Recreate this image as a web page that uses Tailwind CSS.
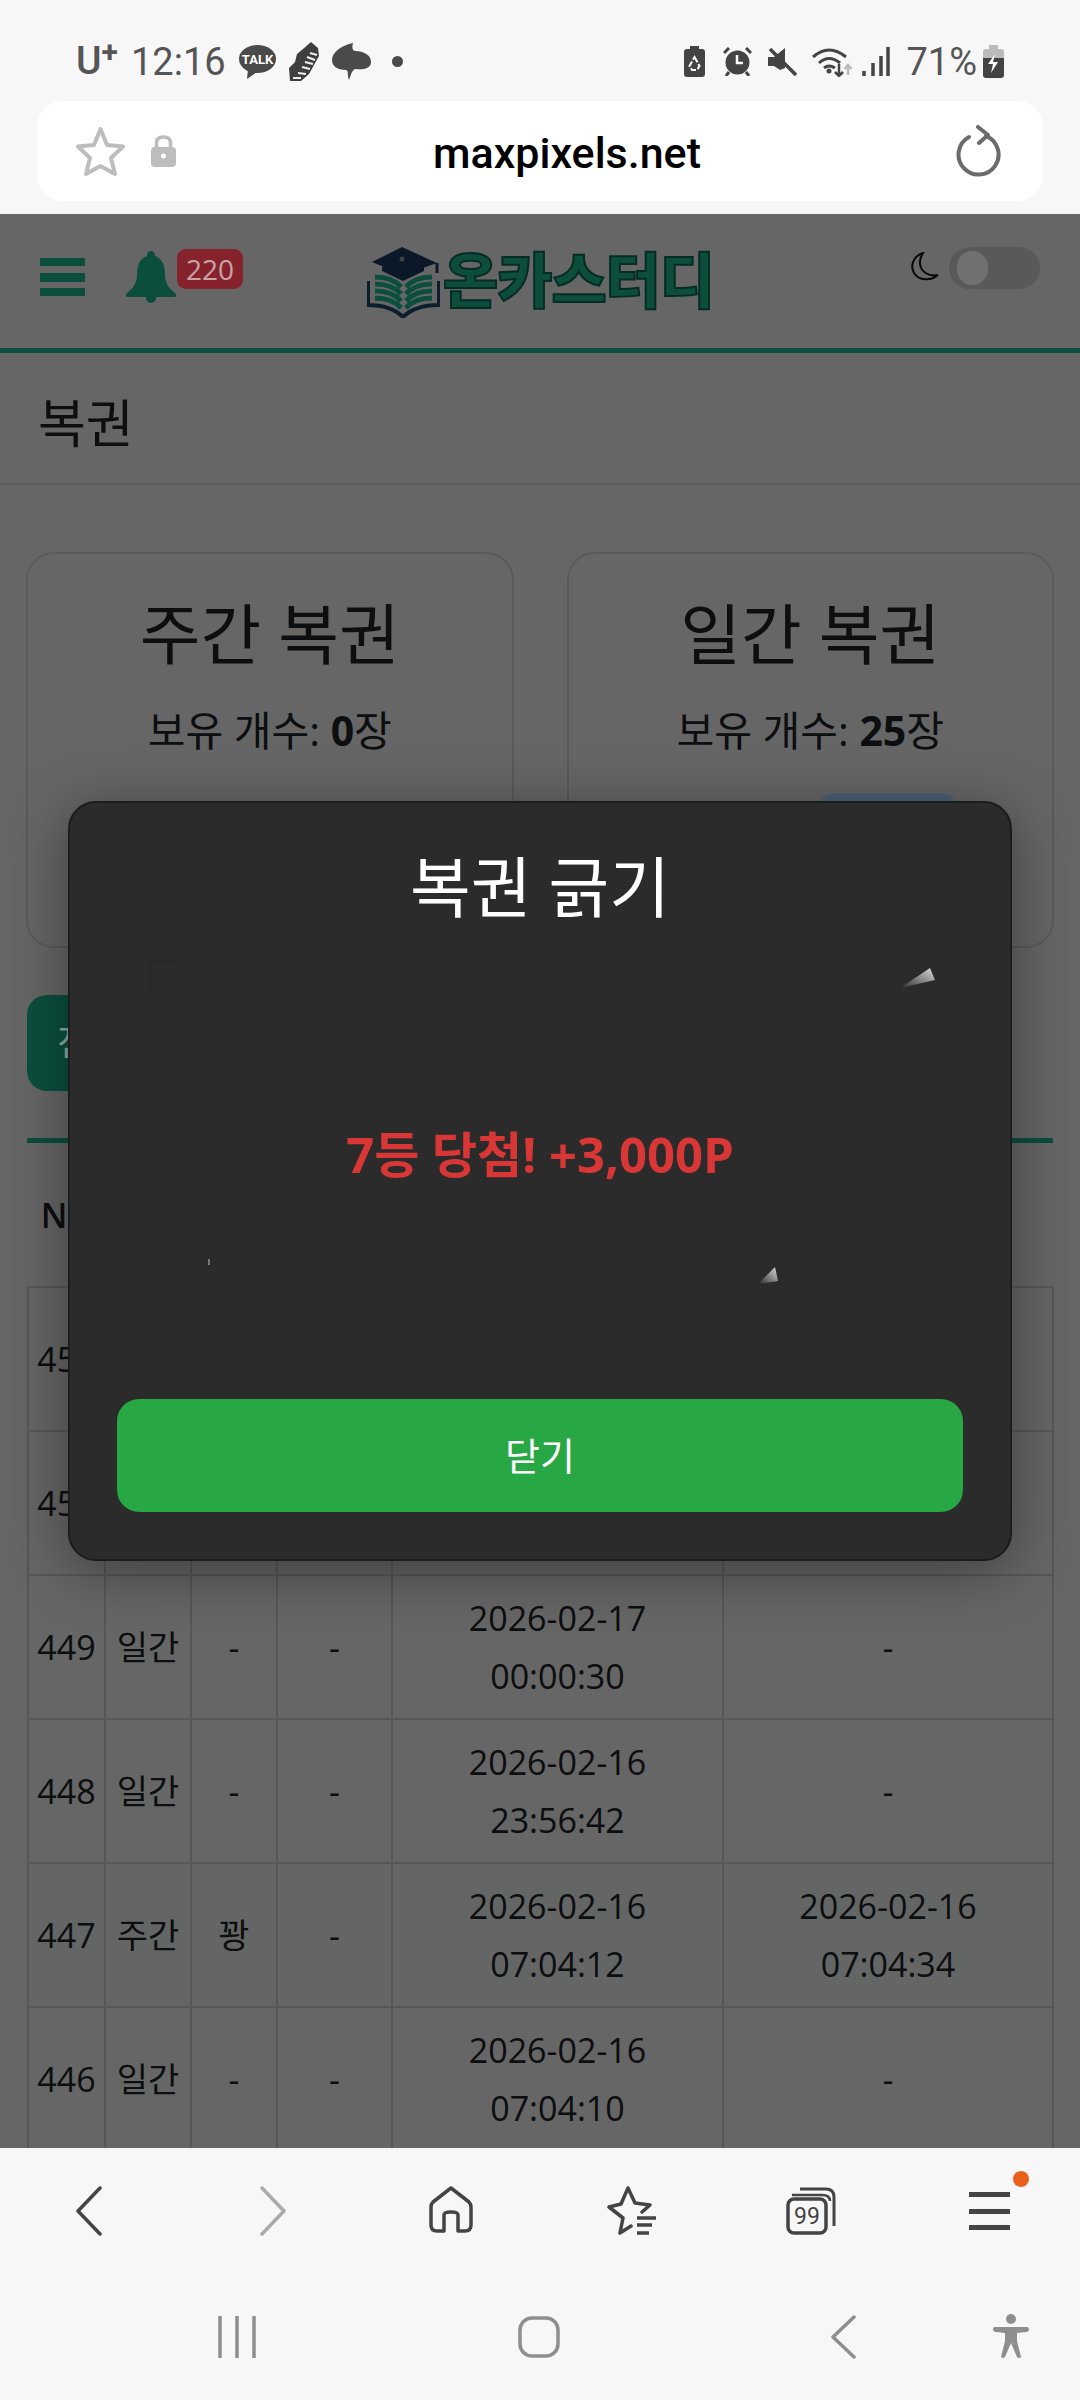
<!DOCTYPE html>
<html lang="ko">

<head>
	<meta charset="UTF-8">
	<meta name="viewport" content="width=device-width, initial-scale=1.0">
	<script src="https://cdn.jsdelivr.net/npm/@tailwindcss/browser@4"></script>
	<title>복권</title>
</head>

<body class="font-['Open_Sans','Noto_Sans_CJK_KR',sans-serif] text-[#212529]">
	<div class="flex flex-col w-[1080px] h-[2400px] overflow-hidden bg-[#f7f7f7]">

		<!-- browser chrome, top -->
		<div class="h-[214px] shrink-0 font-['Roboto','Noto_Sans_CJK_KR',sans-serif]">
			<div class="flex items-center justify-between h-[101px] pl-[76px] pr-[76px] pt-[22px] text-[#555]">
				<div class="flex items-center">
					<span class="text-[39px] leading-none font-medium w-[55px]">U<span class="relative top-[-12px] text-[30px] font-bold">+</span></span>
					<span class="text-[38px] leading-none w-[108px]">12:16</span>
					<svg class="w-[37px] h-[34px]" viewBox="0 0 37 34">
						<ellipse cx="18.5" cy="14" rx="18.5" ry="14" fill="#4a4a4a" />
						<path d="M9 24 L8 34 L18 27 Z" fill="#4a4a4a" />
						<text x="18.5" y="19" text-anchor="middle" font-size="13" font-weight="700" fill="#fff" font-family="Roboto">TALK</text>
					</svg>
					<svg class="w-[30px] h-[39px] ml-[13px]" viewBox="0 0 30 39">
						<path d="M22 0 L29 6 L30 14 L20 32 L12 39 L1 39 L0 26 L6 20 L8 12 L14 7 Z" fill="#3f3f3f" />
						<path d="M28 13 L21 11 M26 18 L18 15 M24 22 L16 20 M21 27 L13 25 M17 32 L9 31 M12 36 L4 36" stroke="#eee" stroke-width="2" />
					</svg>
					<svg class="w-[39px] h-[37px] ml-[13px]" viewBox="0 0 39 37">
						<path d="M21 0 C20 4 20 7 23 8 C32 8 39 12 39 19 C39 26 30 27 24 26 C20 26 19 32 17 37 C15 32 17 28 14 27 C5 27 0 23 0 17 C0 9 10 2 21 0 Z" fill="#4a4a4a" />
					</svg>
					<span class="w-[11px] h-[11px] rounded-full bg-[#4a4a4a] ml-[21px]"></span>
				</div>
				<div class="flex items-center">
					<svg class="w-[21px] h-[31px]" viewBox="0 0 21 31">
						<path d="M6 0 H15 V3 H18 Q21 3 21 6 V28 Q21 31 18 31 H3 Q0 31 0 28 V6 Q0 3 3 3 H6 Z" fill="#444" />
						<path d="M10.5 11 L15.5 20 L13 24 H8 L5.5 20 Z" fill="none" stroke="#fff" stroke-width="2" stroke-dasharray="6 2" />
					</svg>
					<svg class="w-[29px] h-[29px] ml-[18px]" viewBox="0 0 29 29">
						<circle cx="14.5" cy="15.5" r="12" fill="#444" />
						<path d="M1 6 L6 1 M28 6 L23 1 M6 25 L3 29 M23 25 L26 29" stroke="#444" stroke-width="3" />
						<path d="M14 8 V16 H20" stroke="#fff" stroke-width="2.5" fill="none" />
					</svg>
					<svg class="w-[29px] h-[28px] ml-[16px]" viewBox="0 0 29 28">
						<path d="M0 9 H6 L17 0 V20 L12 22 L6 18 H0 Z" fill="#444" />
						<path d="M2 1 L28 27" stroke="#444" stroke-width="3.5" />
					</svg>
					<svg class="w-[41px] h-[31px] ml-[15px]" viewBox="0 0 41 31">
						<path d="M1 11 Q17 -3 34 11 M7 17 Q17 8 28 17 M12 22 Q17 18 23 22" stroke="#444" stroke-width="3" fill="none" />
						<circle cx="17" cy="25" r="2.5" fill="#444" />
						<path d="M27 18 V30 M23 26 L27 30 L31 26" stroke="#444" stroke-width="2.5" fill="none" />
						<path d="M36 29 V19 M32.500 23 L36 19 L39.500 23" stroke="#bbb" stroke-width="2.5" fill="none" />
					</svg>
					<svg class="w-[28px] h-[29px] ml-[9px]" viewBox="0 0 28 29">
						<path d="M2 29 V24 M11 29 V16 M19 29 V9 M26 29 V0" stroke="#444" stroke-width="3.500" />
					</svg>
					<span class="text-[38px] leading-none ml-[16px]">71%</span>
					<svg class="w-[21px] h-[33px] ml-[6px]" viewBox="0 0 21 33">
						<path d="M6 0 H15 V4 H18 Q21 4 21 7 V13 H0 V7 Q0 4 3 4 H6 Z" fill="#bbb" />
						<path d="M0 13 H21 V30 Q21 33 18 33 H3 Q0 33 0 30 Z" fill="#444" />
						<path d="M12 9 L5 19 H10 L8 28 L15 17 H10 Z" fill="#fff" />
					</svg>
				</div>
			</div>
			<div class="flex items-center h-[100px] mx-[37px] rounded-[26px] bg-white">
				<svg class="w-[51px] h-[51px] ml-[38px]" viewBox="0 0 51 51">
					<path d="M25.500 3 L32 19 L48 20.500 L36 32 L40 48 L25.500 40 L11 48 L15 32 L3 20.500 L19 19 Z" fill="none" stroke="#bdbdbd" stroke-width="4" stroke-linejoin="round" />
				</svg>
				<svg class="w-[25px] h-[32px] ml-[25px]" viewBox="0 0 25 32">
					<path d="M5.500 14 V8 Q5.500 2 12.500 2 Q19.500 2 19.500 8 V14" fill="none" stroke="#bdbdbd" stroke-width="3.500" />
					<rect y="12" width="25" height="20" rx="4" fill="#bdbdbd" />
					<circle cx="12.500" cy="21" r="2.500" fill="#fff" />
				</svg>
				<span class="text-[43px] leading-none font-medium text-black w-[273px] ml-[257px] pt-[4px] whitespace-nowrap">maxpixels.net</span>
				<svg class="w-[46px] h-[52px] ml-[250px]" viewBox="0 0 46 52">
					<path d="M13 12 A20 20 0 1 0 30 11" fill="none" stroke="#6b6b6b" stroke-width="4" stroke-linecap="round" />
					<path d="M22 2 L32 10 L23 18" fill="none" stroke="#6b6b6b" stroke-width="4" stroke-linecap="round" stroke-linejoin="round" />
				</svg>
			</div>
		</div>

		<!-- page under the modal -->
		<div class="relative flex-1 overflow-hidden bg-white">
			<div class="flex items-start h-[139px] pl-[40px] pr-[40px] border-b-[5px] border-[#1cc49a]">
				<svg class="w-[45px] h-[38px] mt-[44px]" viewBox="0 0 45 38">
					<path d="M0 0 H45 V8 H0 Z M0 15 H45 V24 H0 Z M0 30 H45 V38 H0 Z" fill="#1cc49a" />
				</svg>
				<svg class="w-[50px] h-[52px] ml-[41px] mt-[37px]" viewBox="0 0 50 52">
					<path d="M25 0 C22 0 21 3 21 5 C13 8 11 15 11 24 C11 33 6 38 1 42 C-1 44 0 46 2 46 H48 C50 46 51 44 49 42 C44 38 39 33 39 24 C39 15 37 8 29 5 C29 3 28 0 25 0 Z" fill="#1cc49a" />
					<circle cx="25" cy="47" r="5" fill="#1cc49a" />
				</svg>
				<span class="relative z-20 flex items-center justify-center w-[66px] h-[40px] ml-[1px] mt-[35px] rounded-[9px] bg-[#85222c] text-[#c9a3a8] text-[28px] leading-none">220</span>
				<svg class="w-[73px] h-[71px] ml-[124px] mt-[33px]" viewBox="0 0 73 71">
					<path d="M1 34 V58 C15 58 28 62 36 70 C44 62 58 58 72 58 V34" fill="none" stroke="#1f4a70" stroke-width="4" />
					<path d="M8 30 C18 30 28 33 34 40 M8 37 C18 37 28 40 34 47 M8 44 C18 44 28 47 34 54 M8 51 C18 51 28 54 34 61 M65 30 C55 30 45 33 39 40 M65 37 C55 37 45 40 39 47 M65 44 C55 44 45 47 39 54 M65 51 C55 51 45 54 39 61" fill="none" stroke="#1cc49a" stroke-width="5" />
					<path d="M15 20 H57 V24 L36 34 L15 24 Z" fill="#193e64" />
					<path d="M35 0 L70 16 L36 28 L5 15 Z" fill="#193e64" />
					<circle cx="35" cy="12" r="2.500" fill="#9aa" />
					<path d="M70 16 V26" stroke="#193e64" stroke-width="3" />
				</svg>
				<span class="ml-[3px] mt-[30px] text-[60px] leading-[72px] font-black tracking-[-1px] whitespace-nowrap text-[#1fc494] [-webkit-text-stroke:2px_#0e6f5a]">온카스터디</span>
				<svg class="w-[29px] h-[29px] ml-auto mt-[38px]" viewBox="0 0 29 29">
					<path d="M13 1 C3 4 0 14 4 21 C9 29 21 29 28 23 C19 25 11 20 10 12 C9.500 8 11 4 13 1 Z" fill="none" stroke="#111" stroke-width="2" />
				</svg>
				<span class="relative z-20 flex items-center w-[91px] h-[42px] ml-[10px] mt-[33px] pl-[8px] rounded-full bg-[#595959]">
					<span class="w-[31px] h-[34px] rounded-full bg-[#707070]"></span>
				</span>
			</div>

			<div class="h-[132px] border-b-2 border-[#dee2e6] pl-[38px] pt-[35px] text-[52px] leading-[70px]">복권</div>

			<div class="px-[27px]">
				<div class="grid grid-cols-2 gap-[53px] mx-[-1px] mt-[67px]">
					<div class="h-[396px] rounded-[28px] border-2 border-[#dee2e6] pt-[34px] text-center">
						<h2 class="text-[66px] leading-[90px]">주간 복권</h2>
						<p class="mt-[24px] text-[41px] leading-[56px]">보유 개수: <b>0</b>장</p>
					</div>
					<div class="relative h-[396px] rounded-[28px] border-2 border-[#dee2e6] pt-[34px] text-center">
						<h2 class="text-[66px] leading-[90px]">일간 복권</h2>
						<p class="mt-[24px] text-[41px] leading-[56px]">보유 개수: <b>25</b>장</p>
						<span class="absolute z-20 left-[251px] top-[239px] w-[136px] h-[70px] rounded-[14px] bg-[#4c6074]"></span>
					</div>
				</div>

				<div class="relative z-20 flex items-center w-[200px] h-[96px] mt-[47px] pl-[30px] rounded-[20px] bg-[#0b4f3e] text-[#8fb0a2] text-[36px]">전체</div>
				<div class="mt-[47px] border-t-[5px] border-[#1cc49a]"></div>

				<table class="table-fixed w-[1025px] border-collapse text-center text-[34px] leading-[58px]">
					<colgroup>
						<col class="w-[77px]">
						<col class="w-[86px]">
						<col class="w-[86px]">
						<col class="w-[115px]">
						<col class="w-[331px]">
						<col class="w-[330px]">
					</colgroup>
					<tr class="h-[144px] font-semibold">
						<td class="pl-[2px]">NO</td>
						<td></td>
						<td></td>
						<td></td>
						<td></td>
						<td></td>
					</tr>
					<tr class="h-[144px]">
						<td class="border-2 border-[#dadada]">451</td>
						<td class="border-2 border-[#dadada]"></td>
						<td class="border-2 border-[#dadada]"></td>
						<td class="border-2 border-[#dadada]"></td>
						<td class="border-2 border-[#dadada]"></td>
						<td class="border-2 border-[#dadada]"></td>
					</tr>
					<tr class="h-[144px]">
						<td class="border-2 border-[#dadada]">450</td>
						<td class="border-2 border-[#dadada]"></td>
						<td class="border-2 border-[#dadada]"></td>
						<td class="border-2 border-[#dadada]"></td>
						<td class="border-2 border-[#dadada]"></td>
						<td class="border-2 border-[#dadada]"></td>
					</tr>
					<tr class="h-[144px]">
						<td class="border-2 border-[#dadada]">449</td>
						<td class="border-2 border-[#dadada]">일간</td>
						<td class="border-2 border-[#dadada]">-</td>
						<td class="border-2 border-[#dadada]">-</td>
						<td class="border-2 border-[#dadada]">2026-02-17<br>00:00:30</td>
						<td class="border-2 border-[#dadada]">-</td>
					</tr>
					<tr class="h-[144px]">
						<td class="border-2 border-[#dadada]">448</td>
						<td class="border-2 border-[#dadada]">일간</td>
						<td class="border-2 border-[#dadada]">-</td>
						<td class="border-2 border-[#dadada]">-</td>
						<td class="border-2 border-[#dadada]">2026-02-16<br>23:56:42</td>
						<td class="border-2 border-[#dadada]">-</td>
					</tr>
					<tr class="h-[144px] bg-[#f9fffc]">
						<td class="border-2 border-[#dadada]">447</td>
						<td class="border-2 border-[#dadada]">주간</td>
						<td class="border-2 border-[#dadada]">꽝</td>
						<td class="border-2 border-[#dadada]">-</td>
						<td class="border-2 border-[#dadada]">2026-02-16<br>07:04:12</td>
						<td class="border-2 border-[#dadada]">2026-02-16<br>07:04:34</td>
					</tr>
					<tr class="h-[144px]">
						<td class="border-2 border-[#dadada]">446</td>
						<td class="border-2 border-[#dadada]">일간</td>
						<td class="border-2 border-[#dadada]">-</td>
						<td class="border-2 border-[#dadada]">-</td>
						<td class="border-2 border-[#dadada]">2026-02-16<br>07:04:10</td>
						<td class="border-2 border-[#dadada]">-</td>
					</tr>
				</table>
			</div>

			<!-- overlay + modal -->
			<div class="absolute inset-0 z-10 bg-black/60"></div>
			<div class="absolute z-30 left-[68px] top-[587px] w-[944px] h-[760px] rounded-[28px] border-2 border-[#1c1c1c] bg-[#2b2b2b] shadow-[0_10px_60px_rgba(0,0,0,0.4)]">
				<h2 class="mt-[38px] text-center text-white text-[66px] leading-[90px]">복권 긁기</h2>
				<svg class="absolute left-0 top-0 w-[940px] h-[756px]" viewBox="0 0 940 756">
					<defs>
						<linearGradient id="shard" x1="0" y1="1" x2="1" y2="0">
							<stop offset="0" stop-color="#ddd" stop-opacity="0" />
							<stop offset="1" stop-color="#ddd" />
						</linearGradient>
					</defs>
					<path d="M830 185 L860 165 L865 177 Z" fill="url(#shard)" />
					<path d="M688 481 L705 464 L708 478 Z" fill="url(#shard)" />
					<rect x="138" y="456" width="2" height="6" fill="#777" />
					<path d="M80 159 H105 M80 159 V190" stroke="#292929" stroke-width="3" fill="none" />
				</svg>
				<p class="mt-[193px] text-center text-[#d93636] text-[49px] leading-[60px] font-bold blur-[0.6px]">7등 당첨! +3,000P</p>
				<button class="absolute left-[47px] top-[596px] w-[846px] h-[113px] rounded-[22px] bg-[#28a745] text-white text-[38px]">닫기</button>
			</div>
		</div>

		<!-- browser chrome, bottom -->
		<div class="h-[252px] shrink-0">
			<div class="flex items-start h-[148px] pt-[38px] pl-[76px]">
				<svg class="w-[26px] h-[50px]" viewBox="0 0 26 50">
					<path d="M24 2 L2 25 L24 48" fill="none" stroke="#444" stroke-width="3.500" stroke-linecap="round" stroke-linejoin="round" />
				</svg>
				<svg class="w-[26px] h-[50px] ml-[158px]" viewBox="0 0 26 50">
					<path d="M2 2 L24 25 L2 48" fill="none" stroke="#aaa" stroke-width="3.500" stroke-linecap="round" stroke-linejoin="round" />
				</svg>
				<svg class="w-[46px] h-[48px] ml-[142px]" viewBox="0 0 46 48">
					<path d="M23 2 L5 16 Q3 18 3 21 V39 Q3 45 9 45 H16 V29 Q16 26 23 26 Q30 26 30 29 V45 H37 Q43 45 43 39 V21 Q43 18 41 16 Z" fill="none" stroke="#444" stroke-width="3.500" stroke-linejoin="round" />
				</svg>
				<svg class="w-[52px] h-[50px] ml-[132px]" viewBox="0 0 52 50">
					<path d="M22 2 L29 17 L44 19 L36 26 M14 47 L17 32 L3 21 L15 18 L22 2 M14 47 L25 40" fill="none" stroke="#444" stroke-width="3.500" stroke-linecap="round" stroke-linejoin="round" />
					<path d="M31 32 H50 M31 39 H46 M31 47 H43" stroke="#444" stroke-width="3.500" />
				</svg>
				<svg class="w-[50px] h-[49px] ml-[128px]" viewBox="0 0 50 49">
					<path d="M14 3 H40 Q48 3 48 11 V40" fill="none" stroke="#444" stroke-width="3" />
					<path d="M6 9 H36 Q44 9 44 15" fill="none" stroke="#444" stroke-width="2.500" />
					<rect x="2" y="13" width="38" height="34" rx="6" fill="#f7f7f7" stroke="#444" stroke-width="3.500" />
					<text x="21" y="38" text-anchor="middle" font-size="23" fill="#444" font-family="Roboto">99</text>
				</svg>
				<div class="relative w-[41px] h-[38px] ml-[133px] mt-[6px] flex flex-col justify-between">
					<span class="h-[5px] bg-[#444]"></span>
					<span class="h-[5px] bg-[#444]"></span>
					<span class="h-[5px] bg-[#444]"></span>
					<span class="absolute left-[44px] top-[-21px] w-[16px] h-[16px] rounded-full bg-[#e8601c]"></span>
				</div>
			</div>
			<div class="flex items-start pl-[218px]">
				<svg class="w-[38px] h-[42px] mt-[20px]" viewBox="0 0 38 42">
					<path d="M2 1 V41 M19 1 V41 M36 1 V41" stroke="#8e8e8e" stroke-width="3.500" stroke-linecap="round" />
				</svg>
				<svg class="w-[42px] h-[42px] ml-[262px] mt-[20px]" viewBox="0 0 42 42">
					<rect x="2" y="2" width="38" height="38" rx="12" fill="none" stroke="#8e8e8e" stroke-width="3.500" />
				</svg>
				<svg class="w-[25px] h-[44px] ml-[271px] mt-[19px]" viewBox="0 0 25 44">
					<path d="M23 2 L2 22 L23 42" fill="none" stroke="#8e8e8e" stroke-width="3.500" stroke-linecap="round" stroke-linejoin="round" />
				</svg>
				<svg class="w-[36px] h-[44px] ml-[137px] mt-[18px]" viewBox="0 0 36 44">
					<circle cx="18" cy="5" r="5" fill="#8e8e8e" />
					<path d="M2 13 Q0 13 0 15 Q0 18 3 18 L12 19 V27 L8 43 Q10 45 12 43 L18 29 L24 43 Q26 45 28 43 L24 27 V19 L33 18 Q36 18 36 15 Q36 13 34 13 Z" fill="#8e8e8e" />
				</svg>
			</div>
		</div>
	</div>
</body>

</html>
